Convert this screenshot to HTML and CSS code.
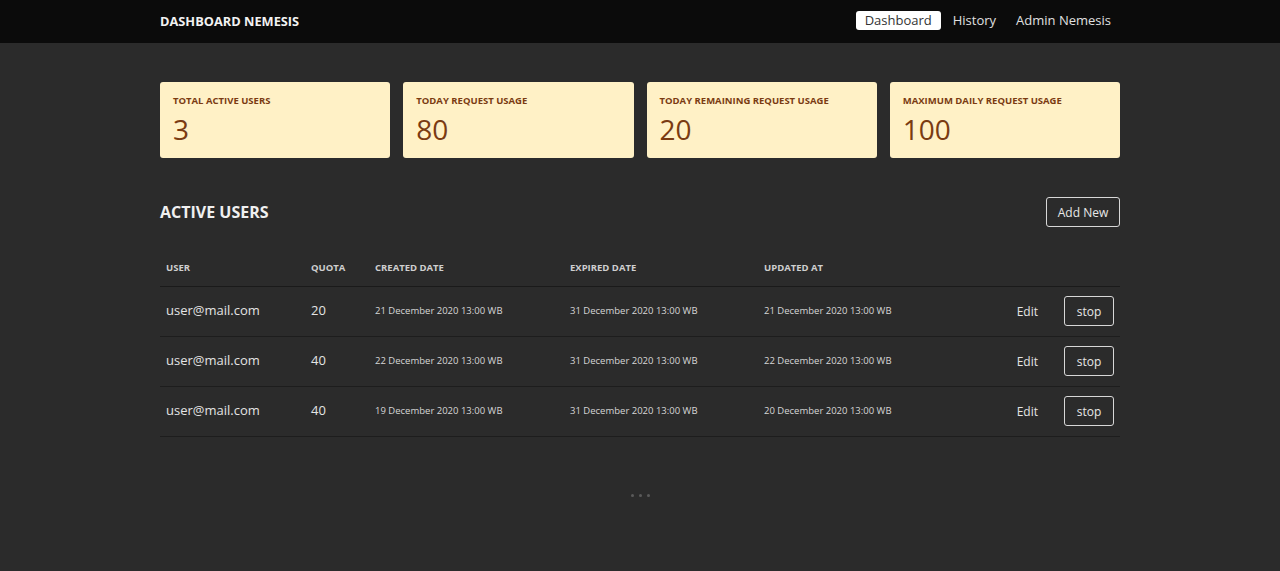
FILE: index.html
```html
<!DOCTYPE html>
<html>
<head>
<meta charset="utf-8">
<link rel="stylesheet" href="styles.css">
</head>
<body>
<header class="topbar">
  <div class="container bar-inner">
    <div class="brand">DASHBOARD NEMESIS</div>
    <nav class="nav">
      <a class="nav-link active">Dashboard</a>
      <a class="nav-link">History</a>
      <a class="nav-link">Admin Nemesis</a>
    </nav>
  </div>
</header>
<main class="container">
  <section class="cards">
    <div class="card"><div class="card-label">TOTAL ACTIVE USERS</div><div class="card-value">3</div></div>
    <div class="card"><div class="card-label">TODAY REQUEST USAGE</div><div class="card-value">80</div></div>
    <div class="card"><div class="card-label">TODAY REMAINING REQUEST USAGE</div><div class="card-value">20</div></div>
    <div class="card"><div class="card-label">MAXIMUM DAILY REQUEST USAGE</div><div class="card-value">100</div></div>
  </section>
  <section class="section-head">
    <h2 class="title">ACTIVE USERS</h2>
    <button class="btn btn-add">Add New</button>
  </section>
  <section class="table">
    <div class="row head">
      <div>USER</div><div>QUOTA</div><div>CREATED DATE</div><div>EXPIRED DATE</div><div>UPDATED AT</div><div></div>
    </div>
    <div class="row">
      <div class="email">user@mail.com</div><div class="quota">20</div><div class="date">21 December 2020 13:00 WB</div><div class="date">31 December 2020 13:00 WB</div><div class="date">21 December 2020 13:00 WB</div>
      <div class="actions"><span class="edit">Edit</span><button class="btn btn-stop">stop</button></div>
    </div>
    <div class="row">
      <div class="email">user@mail.com</div><div class="quota">40</div><div class="date">22 December 2020 13:00 WB</div><div class="date">31 December 2020 13:00 WB</div><div class="date">22 December 2020 13:00 WB</div>
      <div class="actions"><span class="edit">Edit</span><button class="btn btn-stop">stop</button></div>
    </div>
    <div class="row">
      <div class="email">user@mail.com</div><div class="quota">40</div><div class="date">19 December 2020 13:00 WB</div><div class="date">31 December 2020 13:00 WB</div><div class="date">20 December 2020 13:00 WB</div>
      <div class="actions"><span class="edit">Edit</span><button class="btn btn-stop">stop</button></div>
    </div>
  </section>
  <div class="dots"><span></span><span></span><span></span></div>
</main>
</body>
</html>
```
FILE: styles.css
```css
* { box-sizing: border-box; }
html, body { margin: 0; padding: 0; }
body {
  background: #2b2b2b;
  font-family: "Open Sans", "Noto Sans", sans-serif;
  color: #e6e6e6;
  min-height: 571px;
}
.container { width: 960px; margin: 0 auto; }
.topbar { background: #0b0b0b; height: 43px; }
.bar-inner { display: flex; align-items: center; justify-content: space-between; height: 41px; }
.brand { font-weight: 700; font-size: 12.8px; color: #f2f2f2; }
.nav { display: flex; align-items: center; margin-right: 9px; }
.nav-link { font-size: 13px; color: #e0e0e0; padding: 1px 10px; line-height: 17px; border-radius: 3px; }
.nav-link.active { background: #fff; color: #333; padding: 1px 9px; margin-right: 2px; line-height: 17px; height: 19px; }
.nav-link:last-child { padding-right: 0; }
.cards { display: grid; grid-template-columns: repeat(4, 1fr); gap: 13px; margin-top: 39px; }
.card { background: #fff1c6; border-radius: 3px; height: 76px; padding: 13px 13px; color: #7a3b12; }
.card-label { font-size: 9.5px; font-weight: 700; line-height: 12px; }
.card-value { font-size: 28px; line-height: 34px; margin-top: 5px; }
.section-head { display: flex; justify-content: space-between; align-items: center; margin-top: 38px; height: 32px; }
.title { margin: 0; font-size: 16px; font-weight: 700; color: #f0f0f0; }
.btn { background: transparent; font-family: inherit; color: #e8e8e8; border: 1px solid #d8d8d8; border-radius: 3px; cursor: pointer; }
.btn-add { font-size: 12px; height: 30px; width: 74px; padding: 0; }
.table { margin-top: 27px; }
.row { display: grid; grid-template-columns: 145px 64px 195px 194px 1fr 130px; align-items: center; height: 50px; border-bottom: 1px solid #1d1d1d; }
.row > div { padding-left: 6px; padding-bottom: 3px; }
.row.head { height: 32px; border-bottom: 1px solid #1a1a1a; font-size: 9.5px; font-weight: 700; color: #cfcfcf; align-items: start; padding-top: 6px; }
.row.head > div { padding-bottom: 0; }
.email { font-size: 13px; color: #e4e4e4; }
.quota { font-size: 13px; color: #e4e4e4; }
.date { font-size: 9.5px; color: #d6d6d6; }
.actions { display: flex; justify-content: flex-end; align-items: center; gap: 26px; padding-right: 6px; }
.row > .actions { padding-bottom: 1px; }
.edit { font-size: 12px; color: #e4e4e4; }
.btn-stop { font-size: 12px; width: 50px; height: 30px; padding: 0; }
.dots { display: flex; justify-content: center; gap: 5px; margin-top: 57px; }
.dots span { width: 3px; height: 3px; border-radius: 50%; background: #5a5a5a; }
```
